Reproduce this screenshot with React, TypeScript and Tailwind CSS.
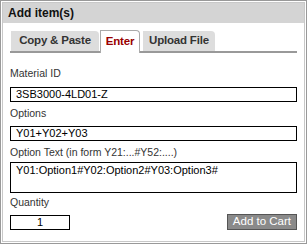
const font = { fontFamily: '"Liberation Sans", Arial, sans-serif' };

const App = () => {
  return (
    <div className="w-[307px] h-[244px] bg-white" style={font}>
      <div className="h-full border border-[#999] p-px">
        <div className="h-full border border-[#c8c8c8] flex flex-col">
          <div className="h-[20px] bg-[#d4d4d4] px-[5px] flex items-center text-[12px] font-bold text-[#111]">
            Add item(s)
          </div>
          <div className="px-[7px] pt-[6px]">
            <div className="flex items-end border-b-2 border-[#999] pl-[1px] h-[24px] text-[11.5px] font-bold tracking-[-0.2px]">
              <div className="w-[88px] h-[20px] bg-[#ddd] rounded-tr-[4px] flex items-center justify-center text-[#333]">
                Copy &amp; Paste
              </div>
              <div className="w-[40px] ml-[1px] h-[23px] -mb-[2px] bg-white border border-[#aaa] border-b-0 rounded-tr-[4px] flex items-center justify-center text-[#990000]">
                Enter
              </div>
              <div className="w-[72px] ml-[3px] h-[20px] bg-[#ddd] rounded-tr-[4px] flex items-center justify-center text-[#333]">
                Upload File
              </div>
            </div>
            <div className="text-[11px] text-[#333] leading-[13px]">
              <div className="mt-[14px] text-[10.5px]">Material ID</div>
              <div className="mt-[7px] h-[15px] border border-black px-[5px] flex items-center text-black">
                3SB3000-4LD01-Z
              </div>
              <div className="mt-[5px] text-[10.5px]">Options</div>
              <div className="mt-[6px] h-[15px] border border-black px-[5px] flex items-center text-black">
                Y01+Y02+Y03
              </div>
              <div className="mt-[5px] text-[10.5px]">Option Text (in form Y21:...#Y52:....)</div>
              <div className="mt-[3px] h-[31px] border border-black px-[5px] pt-[1px] text-black">
                Y01:Option1#Y02:Option2#Y03:Option3#
              </div>
              <div className="mt-[3px] text-[10.5px]">Quantity</div>
              <div className="mt-[5px] flex items-center justify-between">
                <div className="w-[60px] h-[15px] border border-black flex items-center justify-center text-black">
                  1
                </div>
                <div className="h-[16px] px-[5px] bg-[#8a8a8a] border border-[#555] flex items-center text-white text-[11.5px] leading-none">
                  Add to Cart
                </div>
              </div>
            </div>
          </div>
        </div>
      </div>
    </div>
  );
};

export default App;
